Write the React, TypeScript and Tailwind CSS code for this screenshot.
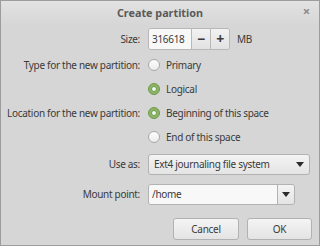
import React from 'react';

const font = { fontFamily: '"Noto Sans", "Open Sans", sans-serif' };

const Radio: React.FC<{ checked?: boolean; label: string }> = ({ checked, label }) => (
  <div className="flex items-center gap-[6px] h-[24px]">
    {checked ? (
      <span className="w-[12px] h-[12px] rounded-full bg-[#8cb567] border border-[#6e9a4a] flex items-center justify-center">
        <span className="w-[6px] h-[6px] rounded-full bg-[#f4f4f4] border border-[#6e9a4a]" />
      </span>
    ) : (
      <span className="w-[12px] h-[12px] rounded-full bg-gradient-to-b from-[#fdfdfd] to-[#ececec] border border-[#a9a9a9]" />
    )}
    <span>{label}</span>
  </div>
);

const Caret = () => (
  <svg width="8" height="5" viewBox="0 0 8 5">
    <path d="M0 0 H8 L4 5 Z" fill="#2b2b2b" />
  </svg>
);

export default function App() {
  return (
    <div className="w-[320px] h-[246px] bg-[#d6d6d6] border border-[#9c9c9c] text-[10px] tracking-[-0.3px] text-[#3a3a3a] flex flex-col whitespace-nowrap overflow-hidden" style={font}>
      <div className="h-[24px] shrink-0 flex items-center justify-center relative bg-gradient-to-b from-[#e2e2e2] to-[#d6d6d6]">
        <span className="font-bold text-[10.8px] tracking-normal text-[#5a5a5a]">Create partition</span>
        <span className="absolute right-[9px] top-[4px] text-[13px] font-bold text-[#8a8a8a] leading-none">×</span>
      </div>

      <div className="grid grid-cols-[139px_1fr] gap-x-[8px] items-center pr-[9px]">
        <span className="text-right h-[28px] leading-[28px]">Size:</span>
        <div className="flex items-center h-[28px]">
          <div className="flex h-[22px] border border-[#b8b8b8] rounded-[3px] overflow-hidden">
            <div className="w-[42px] bg-[#f8f8f8] px-[3px] leading-[20px]">316618</div>
            <div className="w-[19px] border-l border-[#b8b8b8] bg-gradient-to-b from-[#f2f2f2] to-[#e2e2e2] flex items-center justify-center font-bold text-[14px] leading-none">−</div>
            <div className="w-[19px] border-l border-[#b8b8b8] bg-gradient-to-b from-[#f2f2f2] to-[#e2e2e2] flex items-center justify-center font-bold text-[14px] leading-none">+</div>
          </div>
          <span className="ml-[7px]">MB</span>
        </div>

        <span className="text-right">Type for the new partition:</span>
        <Radio label="Primary" />
        <span />
        <Radio checked label="Logical" />

        <span className="text-right">Location for the new partition:</span>
        <Radio checked label="Beginning of this space" />
        <span />
        <Radio label="End of this space" />

        <span className="text-right">Use as:</span>
        <div className="h-[30px] flex items-center">
          <div className="w-full h-[21px] border border-[#b2b2b2] rounded-[3px] bg-gradient-to-b from-[#f4f4f4] to-[#e4e4e4] flex items-center justify-between px-[5px]">
            <span>Ext4 journaling file system</span>
            <Caret />
          </div>
        </div>

        <span className="text-right">Mount point:</span>
        <div className="h-[30px] flex items-center pr-[15px]">
          <div className="w-full h-[21px] border border-[#b2b2b2] rounded-[3px] flex overflow-hidden">
            <div className="flex-1 bg-[#f8f8f8] px-[3px] leading-[19px]">/home</div>
            <div className="w-[17px] border-l border-[#b2b2b2] bg-gradient-to-b from-[#f4f4f4] to-[#e4e4e4] flex items-center justify-center">
              <Caret />
            </div>
          </div>
        </div>
      </div>

      <div className="flex justify-end gap-[8px] pr-[7px] mt-[9px]">
        <button className="w-[66px] h-[22px] border border-[#b2b2b2] rounded-[3px] bg-gradient-to-b from-[#f4f4f4] to-[#e4e4e4]">Cancel</button>
        <button className="w-[65px] h-[22px] border border-[#b2b2b2] rounded-[3px] bg-gradient-to-b from-[#f4f4f4] to-[#e4e4e4]">OK</button>
      </div>
    </div>
  );
}
